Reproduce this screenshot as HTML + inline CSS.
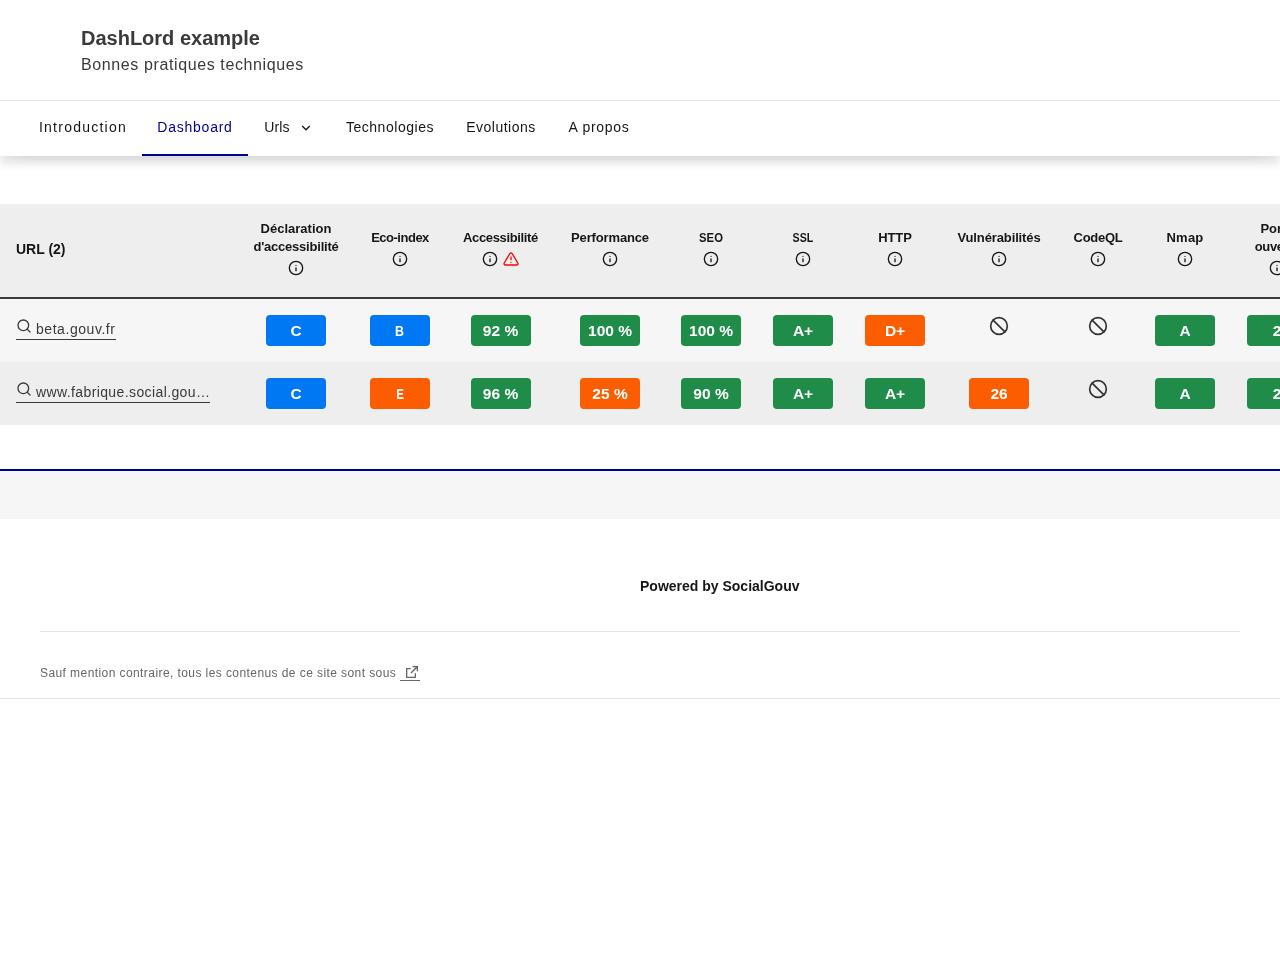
<!DOCTYPE html>
<html lang="fr">
<head>
<meta charset="utf-8">
<title>DashLord example</title>
<style>
*{box-sizing:border-box;margin:0;padding:0}
html,body{width:1280px;height:960px;overflow:hidden;background:#fff}
body{will-change:transform;font-family:"Liberation Sans",sans-serif;color:#161616;position:relative}
a{color:inherit;text-decoration:none}
ul{list-style:none}

/* ---------- header ---------- */
.hdr{position:absolute;left:0;top:0;width:1280px;height:156px;background:#fff;z-index:5;
  box-shadow:0 8px 8px 0 rgba(0,0,0,.1),0 8px 16px -16px rgba(0,0,0,.32)}
.hdr .brand{position:absolute;left:81px;top:0}
.hdr .title{position:absolute;left:0;top:24px;white-space:nowrap;font-weight:700;font-size:20px;line-height:28px;color:#3a3a3a;letter-spacing:0}
.hdr .tagline{position:absolute;left:0;top:53px;white-space:nowrap;font-size:16px;line-height:24px;color:#3a3a3a;letter-spacing:.61px}
.nav{position:absolute;left:0;top:100px;width:1280px;height:56px;border-top:1px solid #e5e5e5}
.nav ul{display:flex;padding-left:24px;height:55px}
.nav li{height:55px;position:relative}
.nav li a,.nav li button{display:flex;align-items:center;justify-content:center;width:100%;padding:0 0 4px;height:55px;font:inherit;font-size:14px;line-height:24px;color:#161616;background:none;border:0;white-space:nowrap}
.nav li.cur a{color:#000091}

.nav li.cur:after{content:"";position:absolute;left:0;right:0;bottom:0;height:2px;background:#000091}

/* ---------- table ---------- */
.tw{position:absolute;left:0;top:204px;width:1280px;height:222px;overflow:hidden}
table{border-collapse:separate;border-spacing:0;table-layout:fixed;width:1323px}
thead tr{background:#eee;height:95px}
thead th{font-weight:700;font-size:13px;line-height:18px;color:#161616;text-align:center;vertical-align:top;border-bottom:2px solid #3a3a3a;padding:0}
thead th.l{vertical-align:middle;text-align:left;padding-left:16px;padding-bottom:4px;font-size:14px}
tbody tr{height:63px}
tbody tr.r1{background:#f6f6f6}
tbody tr.r2{background:#eee}
td{text-align:center;vertical-align:middle;padding:0}
td.l{text-align:left;padding-left:16px}
.b{display:inline-block;width:60px;height:31px;line-height:31px;border-radius:4px;color:#fff;font-weight:700;font-size:15.5px;text-align:center;vertical-align:middle}
.nx{display:inline-block}
.bl{background:#0078f3}.gr{background:#1f8d49}.or{background:#fc5d00}

.t{display:block;white-space:nowrap}
.t i{font-style:normal;display:block}
.ec{letter-spacing:-.49px}.ac{letter-spacing:-.35px}.pe{letter-spacing:-.15px}
.se{transform:scaleX(.87)}.ss{transform:scaleX(.82)}
.ht{letter-spacing:-.06px}.vu{letter-spacing:-.12px}.cq{letter-spacing:-.28px}.nm{letter-spacing:.21px}
.da2{letter-spacing:-.22px}.po2{letter-spacing:-.35px}
/* icons */
svg.i{fill:none;stroke:currentColor;stroke-width:2;stroke-linecap:round;stroke-linejoin:round;display:inline-block;vertical-align:top}
.ico{display:block;height:16px;margin-top:4px;font-size:0;line-height:0}
.ico svg+svg{margin-left:5px}
.th1{display:block;padding-top:24.7px}
.th2{display:block;padding-top:15.7px}
.lk{display:inline-block;vertical-align:top;height:23px;line-height:24px;font-size:14px;color:#3a3a3a;border-bottom:1px solid #3a3a3a;white-space:nowrap;position:relative;padding-left:20px;letter-spacing:.55px}
.lk svg{position:absolute;left:0;top:.5px}
td.l{vertical-align:top;padding-top:18px}
.na{display:inline-block;width:20px;height:20px;color:#333;position:relative;top:-5px}

/* ---------- footer ---------- */
.ft{position:absolute;left:0;top:469px;width:1280px;height:230px;border-top:2px solid #000091;border-bottom:1px solid #e5e5e5;background:#fff}
.ft .band{height:48px;background:#f6f6f6}
.ft .pw{position:absolute;left:640px;top:103px;font-weight:700;font-size:14px;line-height:24px;color:#161616;white-space:nowrap}
.ft .sep{position:absolute;left:40px;top:160px;width:1200px;height:1px;background:#e5e5e5}
.ft .copy{position:absolute;left:40px;top:192px;font-size:12px;line-height:20px;color:#666;white-space:nowrap;letter-spacing:.42px}
.ft .copy a{position:absolute;left:360px;top:1px;width:20px;height:17px;border-bottom:1px solid #666}
.ft .copy a svg{position:absolute;left:4px;top:0;fill:currentColor}
</style>
</head>
<body>

<header class="hdr">
  <div class="brand">
    <p class="title">DashLord example</p>
    <p class="tagline">Bonnes pratiques techniques</p>
  </div>
  <nav class="nav">
    <ul>
      <li style="width:118px"><a href="#" style="letter-spacing:1.24px">Introduction</a></li>
      <li class="cur" style="width:106px"><a href="#" style="letter-spacing:.76px">Dashboard</a></li>
      <li style="width:82px"><button style="letter-spacing:.12px">Urls<svg width="16" height="16" viewBox="0 0 24 24" style="margin-left:8px;position:relative;top:1.5px;fill:currentColor"><path d="M12 13.172l4.95-4.95 1.414 1.414L12 16 5.636 9.636 7.05 8.222z"/></svg></button></li>
      <li style="width:120px"><a href="#" style="letter-spacing:.54px">Technologies</a></li>
      <li style="width:102px"><a href="#" style="letter-spacing:.51px">Evolutions</a></li>
      <li style="width:94px"><a href="#" style="letter-spacing:.72px">A propos</a></li>
    </ul>
  </nav>
</header>

<main class="tw">
<table>
<colgroup>
<col style="width:238px"><col style="width:116px"><col style="width:92px"><col style="width:109px"><col style="width:110px"><col style="width:92px"><col style="width:92px"><col style="width:92px"><col style="width:116px"><col style="width:82px"><col style="width:92px"><col style="width:92px">
</colgroup>
<thead>
<tr>
<th class="l">URL (2)</th>
<th><span class="th2"><span class="t da"><i>Déclaration</i><i class="da2">d'accessibilité</i></span><span class="ico"><svg class="i" width="16" height="16" viewBox="0 0 24 24"><circle cx="12" cy="12" r="10"/><line x1="12" y1="16" x2="12" y2="12"/><line x1="12" y1="8" x2="12.01" y2="8"/></svg></span></span></th>
<th><span class="th1"><span class="t ec">Eco-index</span><span class="ico"><svg class="i" width="16" height="16" viewBox="0 0 24 24"><circle cx="12" cy="12" r="10"/><line x1="12" y1="16" x2="12" y2="12"/><line x1="12" y1="8" x2="12.01" y2="8"/></svg></span></span></th>
<th><span class="th1"><span class="t ac">Accessibilité</span><span class="ico"><svg class="i" width="16" height="16" viewBox="0 0 24 24"><circle cx="12" cy="12" r="10"/><line x1="12" y1="16" x2="12" y2="12"/><line x1="12" y1="8" x2="12.01" y2="8"/></svg><svg class="i" width="16" height="16" viewBox="0 0 24 24" style="color:#f60700"><path d="M10.29 3.86L1.82 18a2 2 0 0 0 1.71 3h16.94a2 2 0 0 0 1.71-3L13.71 3.86a2 2 0 0 0-3.42 0z"/><line x1="12" y1="9" x2="12" y2="13"/><line x1="12" y1="17" x2="12.01" y2="17"/></svg></span></span></th>
<th><span class="th1"><span class="t pe">Performance</span><span class="ico"><svg class="i" width="16" height="16" viewBox="0 0 24 24"><circle cx="12" cy="12" r="10"/><line x1="12" y1="16" x2="12" y2="12"/><line x1="12" y1="8" x2="12.01" y2="8"/></svg></span></span></th>
<th><span class="th1"><span class="t se">SEO</span><span class="ico"><svg class="i" width="16" height="16" viewBox="0 0 24 24"><circle cx="12" cy="12" r="10"/><line x1="12" y1="16" x2="12" y2="12"/><line x1="12" y1="8" x2="12.01" y2="8"/></svg></span></span></th>
<th><span class="th1"><span class="t ss">SSL</span><span class="ico"><svg class="i" width="16" height="16" viewBox="0 0 24 24"><circle cx="12" cy="12" r="10"/><line x1="12" y1="16" x2="12" y2="12"/><line x1="12" y1="8" x2="12.01" y2="8"/></svg></span></span></th>
<th><span class="th1"><span class="t ht">HTTP</span><span class="ico"><svg class="i" width="16" height="16" viewBox="0 0 24 24"><circle cx="12" cy="12" r="10"/><line x1="12" y1="16" x2="12" y2="12"/><line x1="12" y1="8" x2="12.01" y2="8"/></svg></span></span></th>
<th><span class="th1"><span class="t vu">Vulnérabilités</span><span class="ico"><svg class="i" width="16" height="16" viewBox="0 0 24 24"><circle cx="12" cy="12" r="10"/><line x1="12" y1="16" x2="12" y2="12"/><line x1="12" y1="8" x2="12.01" y2="8"/></svg></span></span></th>
<th><span class="th1"><span class="t cq">CodeQL</span><span class="ico"><svg class="i" width="16" height="16" viewBox="0 0 24 24"><circle cx="12" cy="12" r="10"/><line x1="12" y1="16" x2="12" y2="12"/><line x1="12" y1="8" x2="12.01" y2="8"/></svg></span></span></th>
<th><span class="th1"><span class="t nm">Nmap</span><span class="ico"><svg class="i" width="16" height="16" viewBox="0 0 24 24"><circle cx="12" cy="12" r="10"/><line x1="12" y1="16" x2="12" y2="12"/><line x1="12" y1="8" x2="12.01" y2="8"/></svg></span></span></th>
<th><span class="th2"><span class="t po"><i>Ports</i><i class="po2">ouverts</i></span><span class="ico"><svg class="i" width="16" height="16" viewBox="0 0 24 24"><circle cx="12" cy="12" r="10"/><line x1="12" y1="16" x2="12" y2="12"/><line x1="12" y1="8" x2="12.01" y2="8"/></svg></span></span></th>
</tr>
</thead>
<tbody>
<tr class="r1">
<td class="l"><a class="lk" href="#"><svg class="i" width="16" height="16" viewBox="0 0 24 24"><circle cx="11" cy="11" r="8"/><line x1="21" y1="21" x2="16.65" y2="16.65"/></svg>beta.gouv.fr</a></td>
<td><span class="b bl">C</span></td>
<td><span class="b bl"><span class="nx" style="transform:scaleX(.8)">B</span></span></td>
<td><span class="b gr">92 %</span></td>
<td><span class="b gr">100 %</span></td>
<td><span class="b gr">100 %</span></td>
<td><span class="b gr">A+</span></td>
<td><span class="b or">D+</span></td>
<td><span class="na"><svg class="i" width="20" height="20" viewBox="0 0 24 24"><circle cx="12" cy="12" r="10"/><line x1="4.93" y1="4.93" x2="19.07" y2="19.07"/></svg></span></td>
<td><span class="na"><svg class="i" width="20" height="20" viewBox="0 0 24 24"><circle cx="12" cy="12" r="10"/><line x1="4.93" y1="4.93" x2="19.07" y2="19.07"/></svg></span></td>
<td><span class="b gr">A</span></td>
<td><span class="b gr">2</span></td>
</tr>
<tr class="r2">
<td class="l"><a class="lk" href="#" style="letter-spacing:.39px"><svg class="i" width="16" height="16" viewBox="0 0 24 24"><circle cx="11" cy="11" r="8"/><line x1="21" y1="21" x2="16.65" y2="16.65"/></svg>www.fabrique.social.gou…</a></td>
<td><span class="b bl">C</span></td>
<td><span class="b or"><span class="nx" style="transform:scaleX(.74)">E</span></span></td>
<td><span class="b gr">96 %</span></td>
<td><span class="b or">25 %</span></td>
<td><span class="b gr">90 %</span></td>
<td><span class="b gr">A+</span></td>
<td><span class="b gr">A+</span></td>
<td><span class="b or">26</span></td>
<td><span class="na"><svg class="i" width="20" height="20" viewBox="0 0 24 24"><circle cx="12" cy="12" r="10"/><line x1="4.93" y1="4.93" x2="19.07" y2="19.07"/></svg></span></td>
<td><span class="b gr">A</span></td>
<td><span class="b gr">2</span></td>
</tr>
</tbody>
</table>
</main>

<footer class="ft">
  <div class="band"></div>
  <p class="pw">Powered by SocialGouv</p>
  <div class="sep"></div>
  <p class="copy">Sauf mention contraire, tous les contenus de ce site sont sous <a href="#" title="licence etalab-2.0"><svg width="16" height="16" viewBox="0 0 24 24"><path d="M10 6v2H5v11h11v-5h2v6a1 1 0 0 1-1 1H4a1 1 0 0 1-1-1V7a1 1 0 0 1 1-1h6zm11-3v8h-2V6.413l-7.793 7.794-1.414-1.414L17.585 5H13V3h8z"/></svg></a></p>
</footer>

</body>
</html>
